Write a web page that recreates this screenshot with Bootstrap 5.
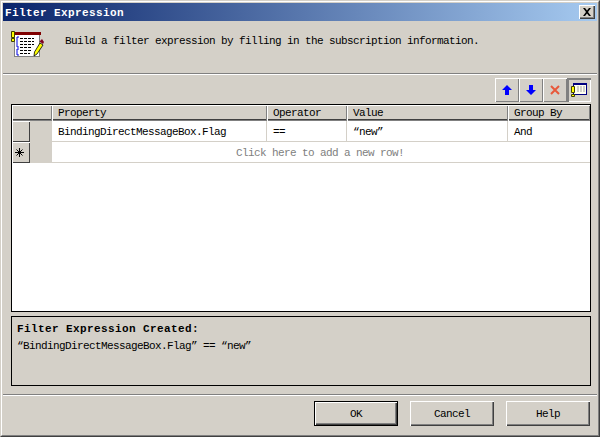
<!DOCTYPE html>
<html lang="en">
<head>
    <meta charset="UTF-8">
    <meta name="viewport" content="width=device-width, initial-scale=1.0">
    <title>Filter Expression</title>
    <link href="https://cdn.jsdelivr.net/npm/bootstrap@5.3.0/dist/css/bootstrap.min.css" rel="stylesheet">
    <style>
        html, body { height: 100%; overflow: hidden; }
        body {
            background-color: #d4d0c8;
            color: #000;
            font-family: "Liberation Mono", "Noto Sans CJK SC", monospace;
            font-size: 11px;
            letter-spacing: -0.6px;
            line-height: 12px;
        }
        .win-outer {
            width: 600px; height: 437px;
            border: 1px solid; border-color: #d4d0c8 #404040 #404040 #d4d0c8;
        }
        .win-inner {
            height: 100%;
            border: 1px solid; border-color: #fff #808080 #808080 #fff;
            padding: 1px;
        }
        .title-bar {
            height: 18px;
            padding: 0 2px 0 2px;
            background: linear-gradient(to right, #0a246a, #a6caf0);
            color: #fff;
            font-weight: 700;
            letter-spacing: 0.4px;
        }
        .title-text { padding-top: 2px; }
        .close-x {
            width: 16px; height: 14px; padding: 0;
            background: #d4d0c8;
            border: 0; border-radius: 0;
            box-shadow: inset 1px 1px 0 #fff, inset -1px -1px 0 #404040, inset -2px -2px 0 #808080;
        }
        .head-area { height: 52px; padding-left: 7px; padding-top: 8px; gap: 21px; }
        .head-text { padding-top: 6px; }
        .sep { height: 2px; border-top: 1px solid #808080; border-bottom: 1px solid #fff; flex: none; }
        .tool-row { padding: 3px 6px 0 0; height: 29px; }
        .tool-btn {
            width: 24px; height: 24px; padding: 0;
            background: #d4d0c8;
            border: 0; border-radius: 0;
            box-shadow: inset 1px 1px 0 #fff, inset -1px -1px 0 #808080;
        }
        .tool-on { box-shadow: inset 2px 2px 0 #808080, inset -1px -1px 0 #fff; }
        .grid-box {
            margin-left: 8px; width: 580px; height: 208px;
            border: 1px solid #000;
            background: #fff;
        }
        .grid-row { display: flex; }
        .gh {
            height: 16px; padding: 2px 0 0 6px;
            background: #d4d0c8;
            box-shadow: inset 1px 1px 0 #fff, inset -1px -1px 0 #808080, inset 0 -2px 0 #404040;
            flex: none;
        }
        .gc {
            height: 21px; padding: 5px 0 0 6px;
            border-bottom: 1px solid #d4d0c8;
            border-right: 1px solid #d4d0c8;
            flex: none;
        }
        .w-corner { width: 40px; }
        .w-prop { width: 215px; }
        .w-oper { width: 80px; }
        .w-val { width: 161px; }
        .w-grp { width: 82px; border-right: 0; }
        .row-tick {
            width: 18px; height: 21px; flex: none;
            background: #d4d0c8;
            box-shadow: inset 1px 1px 0 #fff, inset -1px -1px 0 #404040;
        }
        .row-star { padding-right: 3px; }
        .row-gap { width: 22px; height: 21px; flex: none; background: #d4d0c8; }
        .add-row {
            width: 538px; height: 21px; padding-top: 5px; padding-right: 2px;
            text-align: center; color: #808080;
            border-bottom: 1px solid #d4d0c8;
        }
        .sum-box {
            margin: 4px 0 0 8px; width: 580px; height: 70px;
            border: 1px solid #000;
            padding: 6px 5px;
        }
        .sum-title { font-weight: 700; letter-spacing: 0.4px; margin-bottom: 5px; }
        .foot { margin-top: 8px; }
        .foot-row { padding: 5px 7px 0 0; gap: 12px; }
        .dlg-btn {
            width: 84px; height: 25px; padding: 1px 0 0;
            font-size: 11px; letter-spacing: -0.6px; line-height: 12px; color: #000;
            font-family: inherit;
            background: #d4d0c8;
            border: 0; border-radius: 0;
            box-shadow: inset 1px 1px 0 #fff, inset -1px -1px 0 #404040, inset -2px -2px 0 #808080;
        }
        .dlg-default { border: 1px solid #000; }
    </style>
</head>
<body>
    <div class="win-outer">
        <div class="win-inner d-flex flex-column">
            <!-- Title bar -->
            <div class="title-bar d-flex align-items-center justify-content-between">
                <span class="title-text">Filter Expression</span>
                <button type="button" class="btn close-x d-flex align-items-center justify-content-center" aria-label="Close">
                    <svg width="10" height="8" viewBox="0 0 10 8"><path d="M1 0h2l2 2.5L7 0h2L6 4l3 4H7L5 5.500 3 8H1l3-4z" fill="#000"/></svg>
                </button>
            </div>

            <!-- Header -->
            <div class="head-area d-flex">
                <svg width="34" height="30" viewBox="0 0 34 30" class="flex-shrink-0">
                    <rect x="4.500" y="5.500" width="25" height="22" fill="#fff" stroke="#808080"/>
                    <rect x="5" y="3" width="26" height="3" fill="#800000"/>
                    <path d="M1.500 2.500h3v6h-3zM1.500 9.500h3v3h-3z" fill="#ffff00" stroke="#404000"/>
                    <path d="M9 8H7v10h2M9 20H7v6h2" fill="none" stroke="#0000e0"/>
                    <path d="M10 9.500h14M10 12.500h14M10 15.500h14M10 18.500h12M10 21.500h11M10 24.500h10" stroke="#000" stroke-dasharray="3 1"/>
                    <path d="M30 14l3 2-6 9-3 2 .5-4z" fill="#ffff00" stroke="#000" stroke-width=".8"/>
                    <path d="M29.500 12.500l3.500 2.500 1-2-2-3z" fill="#800020"/>
                </svg>
                <div class="head-text">Build a filter expression by filling in the subscription information.</div>
            </div>
            <div class="sep"></div>

            <!-- Toolbar -->
            <div class="tool-row d-flex justify-content-end">
                <button type="button" class="btn tool-btn d-flex align-items-center justify-content-center" aria-label="Move up">
                    <svg width="10" height="10" viewBox="0 0 10 10"><path d="M5 0l5 5H7v5H3V5H0z" fill="#0000ff"/></svg>
                </button>
                <button type="button" class="btn tool-btn d-flex align-items-center justify-content-center" aria-label="Move down">
                    <svg width="10" height="10" viewBox="0 0 10 10"><path d="M3 0h4v5h3l-5 5-5-5h3z" fill="#0000ff"/></svg>
                </button>
                <button type="button" class="btn tool-btn d-flex align-items-center justify-content-center" aria-label="Delete">
                    <svg width="10" height="10" viewBox="0 0 10 10"><path d="M1 1l8 8M9 1L1 9" stroke="#e8583a" stroke-width="2"/></svg>
                </button>
                <button type="button" class="btn tool-btn tool-on d-flex align-items-center justify-content-center" aria-label="Toggle summary">
                    <svg width="16" height="16" viewBox="0 0 16 16">
                        <rect x="2.500" y="1.500" width="13" height="11" fill="#fffff0" stroke="#000080"/>
                        <rect x="2" y="1" width="14" height="2" fill="#000080"/>
                        <path d="M6 5h8M6 7h8M6 9h8" stroke="#a0a0a0" stroke-dasharray="2 1"/>
                        <path d="M.5 4.500h3v6h-3zM.5 12.500h3v2h-3z" fill="#ffff00" stroke="#404000"/>
                    </svg>
                </button>
            </div>

            <!-- Grid -->
            <div class="grid-box">
                <div class="grid-row">
                    <div class="gh w-corner"></div>
                    <div class="gh w-prop">Property</div>
                    <div class="gh w-oper">Operator</div>
                    <div class="gh w-val">Value</div>
                    <div class="gh w-grp">Group By</div>
                </div>
                <div class="grid-row">
                    <div class="row-tick"></div>
                    <div class="row-gap"></div>
                    <div class="gc w-prop">BindingDirectMessageBox.Flag</div>
                    <div class="gc w-oper">==</div>
                    <div class="gc w-val">“new”</div>
                    <div class="gc w-grp">And</div>
                </div>
                <div class="grid-row">
                    <div class="row-tick row-star d-flex align-items-center justify-content-center">
                        <svg width="9" height="9" viewBox="0 0 9 9"><path d="M4.500 0v9M0 4.500h9M1.500 1.500l6 6M7.500 1.500l-6 6" stroke="#000"/></svg>
                    </div>
                    <div class="row-gap"></div>
                    <div class="add-row">Click here to add a new row!</div>
                </div>
            </div>

            <!-- Summary -->
            <div class="sum-box">
                <div class="sum-title">Filter Expression Created:</div>
                <div>“BindingDirectMessageBox.Flag” == “new”</div>
            </div>

            <!-- Footer -->
            <div class="sep foot"></div>
            <div class="foot-row d-flex justify-content-end">
                <button type="button" class="btn dlg-btn dlg-default">OK</button>
                <button type="button" class="btn dlg-btn">Cancel</button>
                <button type="button" class="btn dlg-btn">Help</button>
            </div>
        </div>
    </div>
    <script src="https://cdn.jsdelivr.net/npm/bootstrap@5.3.0/dist/js/bootstrap.bundle.min.js"></script>
</body>
</html>
